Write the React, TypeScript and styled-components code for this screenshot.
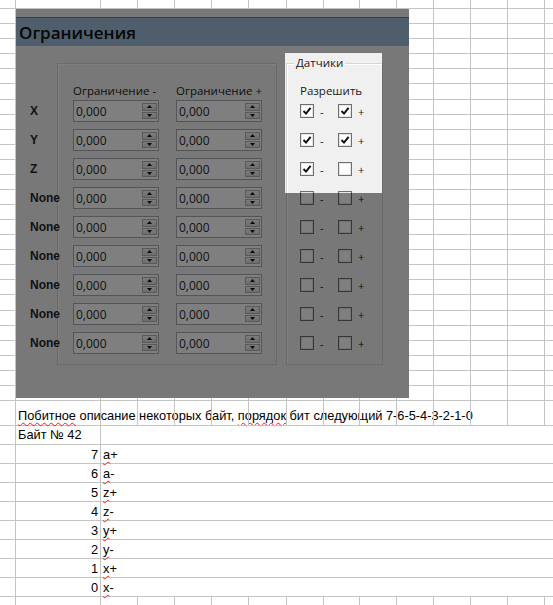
import React from "react";
import styled, { createGlobalStyle } from "styled-components";

const GlobalStyle = createGlobalStyle`
  html, body { margin: 0; padding: 0; background: #ffffff; }
  body { width: 553px; height: 605px; overflow: hidden; }
`;

const GRID = "#c4c4c4";
const COLS = [16, 85, 37, 37, 37, 37, 38, 37, 36, 37, 37, 37, 37, 37, 8];
const TEMPLATE = COLS.map((w) => `${w}px`).join(" ");
const TOP_ROWS = [9, 15, 15, 15, 15, 15, 16, 15, 15, 15, 15, 15, 15, 15, 15, 15, 15, 15, 15, 15, 16, 15, 15, 15, 15, 15, 15];

const Sheet = styled.div`
  position: relative;
  width: 553px;
  height: 605px;
  overflow: hidden;
  background: #fff;
  font-family: "Liberation Sans", Arial, sans-serif;
  font-size: 12.8px;
  color: #000;
`;

const GridRow = styled.div<{ $h: number }>`
  display: grid;
  grid-template-columns: ${TEMPLATE};
  height: ${(p) => p.$h}px;
`;

const Cell = styled.div<{ $last?: boolean; $noBottom?: boolean }>`
  box-sizing: border-box;
  border-right: ${(p) => (p.$last ? "none" : `1px solid ${GRID}`)};
  border-bottom: ${(p) => (p.$noBottom ? "none" : `1px solid ${GRID}`)};
  min-width: 0;
`;

const TextCell = styled(Cell)<{ $right?: boolean; $pb?: number }>`
  display: flex;
  align-items: flex-end;
  justify-content: ${(p) => (p.$right ? "flex-end" : "flex-start")};
  padding: 0 2px ${(p) => p.$pb ?? 1}px 2px;
  line-height: 14px;
  white-space: nowrap;
  overflow: visible;
`;

const DataRow = styled.div`
  display: grid;
  grid-template-columns: 16px 85px 1fr;
  height: 19px;
`;

const Squiggle = styled.span`
  text-decoration: underline wavy #ff1a1a;
  text-decoration-thickness: 1px;
  text-underline-offset: 2px;
  text-decoration-skip-ink: none;
`;

/* ---------- embedded dialog screenshot ---------- */

const Picture = styled.div`
  position: absolute;
  left: 16px;
  top: 9px;
  width: 393px;
  height: 389px;
  overflow: hidden;
  background: #f0f0f0;
  font-family: "Open Sans", "Noto Sans", sans-serif;
  color: #1a1a1a;
`;

const TopStrip = styled.div`
  height: 8px;
  background: #f0f0f0;
`;

const TitleBar = styled.div`
  height: 28px;
  border-top: 1px solid #6f8191;
  background: #9cbcd8;
  display: flex;
  align-items: center;
  padding-left: 3px;
  font-size: 17px;
  font-weight: 600;
  color: #0d0d0d;
`;

const Body = styled.div`
  display: flex;
  align-items: stretch;
  padding: 17px 0 0 14px;
`;

const LabelColumn = styled.div`
  width: 27px;
  display: flex;
  flex-direction: column;
  gap: 7px;
  padding-top: 37px;
`;

const RowLabel = styled.div`
  height: 22px;
  display: flex;
  align-items: center;
  font-family: "Liberation Sans", Arial, sans-serif;
  font-weight: bold;
  font-size: 12px;
  white-space: nowrap;
  color: #111;
  position: relative;
  z-index: 1;
`;

const GroupBox = styled.div<{ $w: number; $pl: number }>`
  position: relative;
  box-sizing: border-box;
  width: ${(p) => p.$w}px;
  height: 302px;
  border: 1px solid #d5d5d5;
  box-shadow: inset 1px 1px 0 #ffffff;
  padding: 20px 0 0 ${(p) => p.$pl}px;
  margin-left: ${(p) => (p.$pl < 15 ? 9 : 0)}px;
`;

const Legend = styled.div`
  position: absolute;
  top: -9px;
  left: 7px;
  padding: 0 2px;
  background: #f0f0f0;
  font-size: 11.5px;
  line-height: 16px;
  color: #1a1a1a;
`;

const HeaderRow = styled.div`
  display: flex;
  gap: 17px;
  height: 14px;
  margin-bottom: 2px;
  font-size: 11.5px;
  line-height: 14px;
  color: #222;
  white-space: nowrap;
`;

const HeaderText = styled.div`
  width: 86px;
`;

const Rows = styled.div`
  display: flex;
  flex-direction: column;
  gap: 7px;
`;

const SpinRow = styled.div`
  display: flex;
  gap: 17px;
  height: 22px;
`;

const SpinBox = styled.div`
  box-sizing: border-box;
  width: 86px;
  height: 22px;
  border: 1px solid #a9abb0;
  background: #ffffff;
  display: flex;
  align-items: center;
  padding: 0 1px 0 2px;
`;

const SpinValue = styled.div`
  flex: 1;
  font-size: 12px;
  color: #2a2a2a;
`;

const Spinner = styled.div`
  display: flex;
  flex-direction: column;
  gap: 1px;
  width: 15px;
  height: 16px;
`;

const SpinHalf = styled.div`
  flex: 1;
  box-sizing: border-box;
  border: 1px solid #b3b3b3;
  background: linear-gradient(#f7f7f7, #dcdcdc);
  display: flex;
  align-items: center;
  justify-content: center;
`;

const CheckRow = styled.div`
  display: flex;
  height: 22px;
  align-items: center;
`;

const CheckItem = styled.div`
  width: 38px;
  display: flex;
  align-items: center;
  gap: 6px;
  font-size: 11px;
  color: #1a1a1a;
`;

const CheckSquare = styled.div`
  box-sizing: border-box;
  width: 14px;
  height: 14px;
  border: 1px solid #6f6f6f;
  background: #ffffff;
  box-shadow: inset 0 0 0 1px #e6e6e6;
  display: flex;
  align-items: center;
  justify-content: center;
`;

const AllowLabel = styled.div`
  height: 14px;
  margin-bottom: 2px;
  font-size: 11.5px;
  line-height: 14px;
  color: #1a1a1a;
`;

const Spotlight = styled.div`
  position: absolute;
  left: 269px;
  top: 44px;
  width: 97px;
  height: 140px;
  box-shadow: 0 0 6px 1200px rgba(0, 0, 0, 0.5);
  pointer-events: none;
`;

const Arrow = ({ up }: { up?: boolean }) => (
  <svg width="5" height="3" viewBox="0 0 5 3">
    <path d={up ? "M0 3 L2.5 0 L5 3 Z" : "M0 0 L5 0 L2.5 3 Z"} fill="#111" />
  </svg>
);

const Spin = () => (
  <SpinBox>
    <SpinValue>0,000</SpinValue>
    <Spinner>
      <SpinHalf>
        <Arrow up />
      </SpinHalf>
      <SpinHalf>
        <Arrow />
      </SpinHalf>
    </Spinner>
  </SpinBox>
);

const Check = ({ on }: { on: boolean }) => (
  <CheckSquare>
    {on && (
      <svg width="10" height="10" viewBox="0 0 10 10">
        <path d="M1.5 5 L4 7.6 L8.6 1.8" fill="none" stroke="#111" strokeWidth="2" />
      </svg>
    )}
  </CheckSquare>
);

const LABELS = ["X", "Y", "Z", "None", "None", "None", "None", "None", "None"];
const CHECKS: [boolean, boolean][] = [
  [true, true],
  [true, true],
  [true, false],
  [false, false],
  [false, false],
  [false, false],
  [false, false],
  [false, false],
  [false, false],
];

const Dialog = () => (
  <Picture>
    <TopStrip />
    <TitleBar>Ограничения</TitleBar>
    <Body>
      <LabelColumn>
        {LABELS.map((l, i) => (
          <RowLabel key={i}>{l}</RowLabel>
        ))}
      </LabelColumn>
      <GroupBox $w={220} $pl={15}>
        <HeaderRow>
          <HeaderText>Ограничение -</HeaderText>
          <HeaderText>Ограничение +</HeaderText>
        </HeaderRow>
        <Rows>
          {LABELS.map((_, i) => (
            <SpinRow key={i}>
              <Spin />
              <Spin />
            </SpinRow>
          ))}
        </Rows>
      </GroupBox>
      <GroupBox $w={97} $pl={13}>
        <Legend>Датчики</Legend>
        <AllowLabel>Разрешить</AllowLabel>
        <Rows>
          {CHECKS.map(([a, b], i) => (
            <CheckRow key={i}>
              <CheckItem>
                <Check on={a} />-
              </CheckItem>
              <CheckItem>
                <Check on={b} />+
              </CheckItem>
            </CheckRow>
          ))}
        </Rows>
      </GroupBox>
    </Body>
    <Spotlight />
  </Picture>
);

const BITS = [
  ["7", "a", "+"],
  ["6", "a", "-"],
  ["5", "z", "+"],
  ["4", "z", "-"],
  ["3", "y", "+"],
  ["2", "y", "-"],
  ["1", "x", "+"],
  ["0", "x", "-"],
];

export default function App() {
  return (
    <>
      <GlobalStyle />
      <Sheet>
        {TOP_ROWS.map((h, r) => (
          <GridRow key={r} $h={h}>
            {COLS.map((_, c) => (
              <Cell key={c} $last={c === COLS.length - 1} />
            ))}
          </GridRow>
        ))}
        <GridRow $h={25}>
          <Cell />
          <TextCell $pb={2}>
            <span>
              <Squiggle>Побитное</Squiggle> описание некоторых байт, <Squiggle>порядок</Squiggle> бит
              следующий 7-6-5-4-3-2-1-0
            </span>
          </TextCell>
          {COLS.slice(2).map((_, c) => (
            <Cell key={c} $last={c === COLS.length - 3} />
          ))}
        </GridRow>
        <DataRow>
          <Cell />
          <TextCell $pb={2}>Байт № 42</TextCell>
          <Cell $last />
        </DataRow>
        {BITS.map(([n, v, s]) => (
          <DataRow key={n}>
            <Cell />
            <TextCell $right>{n}</TextCell>
            <TextCell $last>
              <span>
                <Squiggle>{v}</Squiggle>
                {s}
              </span>
            </TextCell>
          </DataRow>
        ))}
        <GridRow $h={9}>
          {COLS.map((_, c) => (
            <Cell key={c} $last={c === COLS.length - 1} $noBottom />
          ))}
        </GridRow>
        <Dialog />
      </Sheet>
    </>
  );
}
